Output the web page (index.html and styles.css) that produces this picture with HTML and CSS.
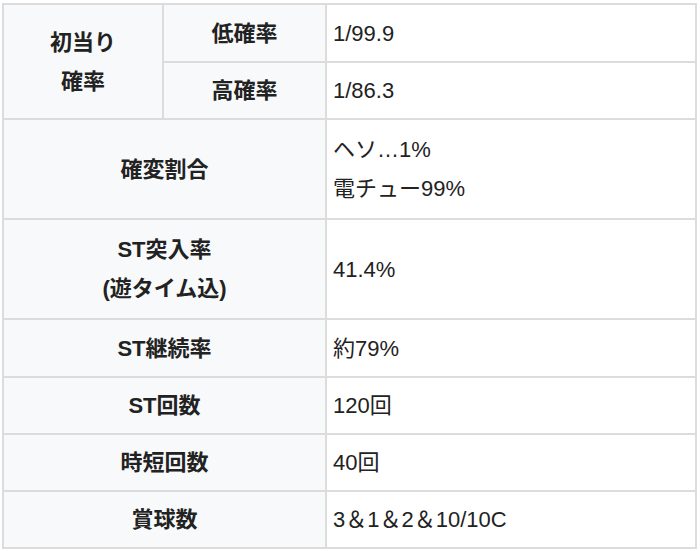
FILE: index.html
```html
<!DOCTYPE html>
<html lang="ja">
<head>
<meta charset="utf-8">
<title>スペック</title>
<link rel="stylesheet" href="styles.css">
</head>
<body>
<table class="spec">
  <colgroup>
    <col class="c1">
    <col class="c2">
    <col class="c3">
  </colgroup>
  <tbody>
    <tr class="r-a">
      <th rowspan="2">初当り<br>確率</th>
      <th>低確率</th>
      <td>1/99.9</td>
    </tr>
    <tr class="r-b">
      <th>高確率</th>
      <td>1/86.3</td>
    </tr>
    <tr class="r-tall">
      <th colspan="2">確変割合</th>
      <td>ヘソ…1%<br>電チュー99%</td>
    </tr>
    <tr class="r-tall">
      <th colspan="2">ST突入率<br>(遊タイム込)</th>
      <td>41.4%</td>
    </tr>
    <tr class="r-a">
      <th colspan="2">ST継続率</th>
      <td>約79%</td>
    </tr>
    <tr class="r-b">
      <th colspan="2">ST回数</th>
      <td>120回</td>
    </tr>
    <tr class="r-b">
      <th colspan="2">時短回数</th>
      <td>40回</td>
    </tr>
    <tr class="r-b">
      <th colspan="2">賞球数</th>
      <td>3＆1＆2＆10/10C</td>
    </tr>
  </tbody>
</table>
</body>
</html>
```

FILE: styles.css
```css
html, body {
  margin: 0;
  padding: 0;
  background: #ffffff;
}

body {
  padding: 3px 0 0 2px;
  font-family: "Liberation Sans", "Noto Sans CJK JP", sans-serif;
  font-size: 22px;
  color: #222222;
}

.spec {
  border-collapse: collapse;
  table-layout: fixed;
  width: 695px;
}

.c1 { width: 160px; }
.c2 { width: 163px; }
.c3 { width: 370px; }

.spec th,
.spec td {
  border: 2px solid #dcdcdc;
  line-height: 39px;
  padding: 0 6px;
  vertical-align: middle;
}

.spec th {
  background: #f8f9fa;
  font-weight: bold;
  text-align: center;
}

.spec td {
  background: #ffffff;
  text-align: left;
  font-weight: normal;
}

.r-a { height: 58px; }
.r-b { height: 57px; }
.r-tall { height: 100px; }
```
